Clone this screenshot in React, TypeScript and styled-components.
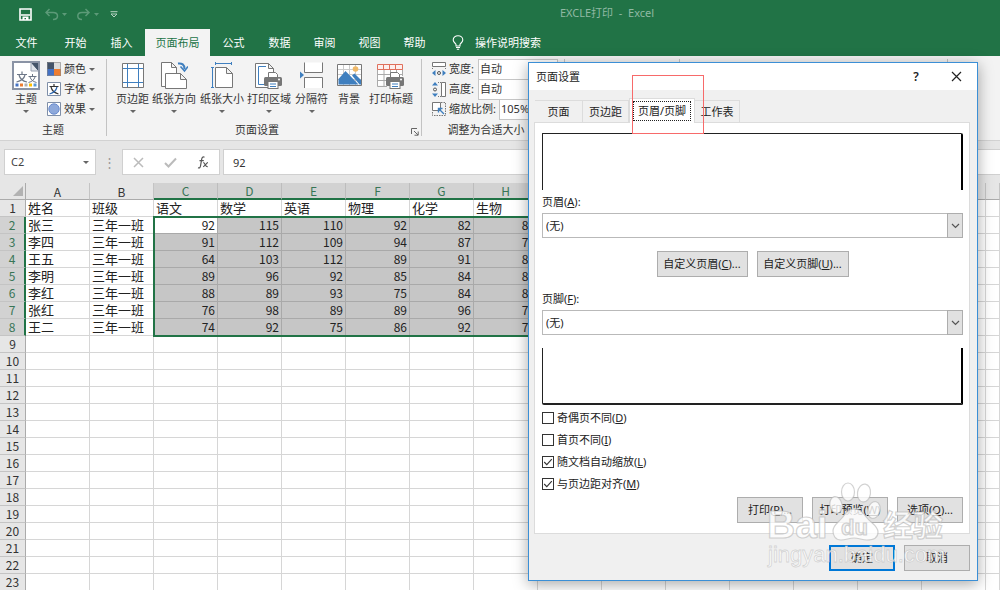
import React from 'react';
import styled, { createGlobalStyle } from 'styled-components';

const GlobalStyle = createGlobalStyle`
  * { box-sizing: border-box; }
  body {
    margin: 0;
    overflow: hidden;
    background: #e6e6e6;
    color: #333;
    font-family: "Noto Sans", "Noto Sans CJK SC", sans-serif;
    font-size: 11px;
    line-height: 16px;
  }
  button, input, select { font: inherit; color: inherit; margin: 0; }
`;

/* ---------- window ---------- */

const Window = styled.div`
  position: relative;
  display: flex;
  flex-direction: column;
  min-width: 0;
`;

const TitleBar = styled.header`
  display: flex;
  align-items: center;
  height: 28px;
  background: #217346;
`;

const QuickAccess = styled.div`
  display: flex;
  align-items: center;
  width: 214px;
  padding-left: 19px;
`;

const QuickButton = styled.button<{ $gap?: number }>`
  display: flex;
  padding: 0;
  border: 0;
  background: none;
  margin-right: ${(p) => p.$gap ?? 0}px;
`;

const DocTitle = styled.div`
  flex: 1;
  text-align: center;
  color: #90b9a3;
  line-height: 24px;
  padding-bottom: 3px;
  white-space: pre;
`;

const TabRow = styled.nav`
  display: flex;
  align-items: flex-end;
  height: 28px;
  background: #217346;
`;

const RibbonTab = styled.button<{ $width?: number; $active?: boolean }>`
  width: ${(p) => p.$width ?? 45}px;
  height: 27px;
  padding: 0;
  border: 0;
  white-space: nowrap;
  background: ${(p) => (p.$active ? '#f3f3f3' : 'transparent')};
  color: ${(p) => (p.$active ? '#217346' : '#fff')};
`;

const TellMe = styled.button`
  display: flex;
  align-items: center;
  gap: 11px;
  height: 27px;
  padding: 0 0 0 15px;
  border: 0;
  background: none;
  color: #fff;
`;

/* ---------- ribbon ---------- */

const Ribbon = styled.section`
  display: flex;
  height: 85px;
  padding: 3px 0 4px;
  background: #f3f3f3;
  border-bottom: 1px solid #d2d2d2;
`;

const Group = styled.div<{ $width: number }>`
  position: relative;
  display: flex;
  flex-direction: column;
  justify-content: space-between;
  flex: 0 0 ${(p) => p.$width}px;
  border-right: 1px solid #c3c3c3;
`;

const GroupBody = styled.div<{ $pad?: number }>`
  display: flex;
  padding-left: ${(p) => p.$pad ?? 0}px;
`;

const GroupLabel = styled.div<{ $inset?: boolean }>`
  padding-right: ${(p) => (p.$inset ? 14 : 0)}px;
  text-align: center;
  line-height: 12px;
`;

const Launcher = styled.button`
  position: absolute;
  right: 2px;
  bottom: 0;
  display: flex;
  padding: 0;
  border: 0;
  background: none;
`;

const BigButton = styled.button<{ $width: number }>`
  display: flex;
  flex-direction: column;
  align-items: center;
  width: ${(p) => p.$width}px;
  padding: 2px 0 0;
  border: 0;
  background: none;
  white-space: nowrap;
  & > svg:first-child { height: 29px; }
`;

const BigLabel = styled.span`
  line-height: 18px;
`;

const Arrow = styled.span`
  flex: none;
  width: 0;
  height: 0;
  border: 3px solid transparent;
  border-top-color: #666;
  border-bottom: 0;
`;

const BigArrow = styled(Arrow)`
  margin-top: 2px;
`;

const SmallStack = styled.div`
  display: flex;
  flex-direction: column;
`;

const SmallButton = styled.button`
  display: flex;
  align-items: center;
  gap: 3px;
  height: 20px;
  padding: 0 2px;
  border: 0;
  background: none;
`;

const FieldRow = styled.div`
  display: flex;
  align-items: center;
  gap: 3px;
  height: 20px;
`;

const FieldLabel = styled.label<{ $width: number }>`
  width: ${(p) => p.$width}px;
  white-space: nowrap;
`;

const RibbonSelect = styled.select<{ $width: number }>`
  appearance: none;
  width: ${(p) => p.$width}px;
  height: 21px;
  padding: 0 1px;
  border: 1px solid #c6c6c6;
  border-radius: 0;
  background: #fff;
`;

/* ---------- formula bar ---------- */

const FormulaBar = styled.section`
  display: flex;
  align-items: center;
  height: 42px;
  padding-left: 4px;
`;

const NameBox = styled.label`
  display: flex;
  align-items: center;
  width: 92px;
  height: 26px;
  padding: 0 6px;
  border: 1px solid #d0d0d0;
  background: #fff;
`;

const NameInput = styled.input`
  flex: 1;
  min-width: 0;
  padding: 0;
  border: 0;
  outline: 0;
  background: none;
  color: #444;
`;

const Grip = styled.div`
  width: 26px;
  text-align: center;
  color: #999;
  font-size: 13px;
`;

const FormulaTools = styled.div`
  display: flex;
  align-items: center;
  justify-content: space-around;
  width: 98px;
  height: 26px;
  border: 1px solid #d0d0d0;
  background: #fff;
`;

const ToolButton = styled.button`
  display: flex;
  padding: 0;
  border: 0;
  background: none;
`;

const FormulaInput = styled.input`
  flex: 1;
  min-width: 0;
  height: 26px;
  margin-left: 3px;
  padding: 0 9px;
  border: 1px solid #d0d0d0;
  border-right: 0;
  outline: 0;
  background: #fff;
`;

/* ---------- sheet ---------- */

const Sheet = styled.main`
  position: relative;
  background: #fff;
`;

const Grid = styled.table`
  width: 100%;
  table-layout: fixed;
  border-collapse: separate;
  border-spacing: 0;
  font-family: "Noto Sans CJK SC", sans-serif;
  color: #222;
`;

const Col = styled.col<{ $width?: number }>`
  width: ${(p) => (p.$width ? `${p.$width}px` : 'auto')};
`;

const ColHead = styled.th<{ $on?: boolean }>`
  height: 17px;
  padding: 0;
  font-size: 12px;
  font-weight: 400;
  line-height: 15px;
  color: ${(p) => (p.$on ? '#387556' : '#333')};
  background: ${(p) => (p.$on ? '#d2d2d2' : '#e6e6e6')};
  border-right: 1px solid ${(p) => (p.$on ? '#bdbdbd' : '#c4c4c4')};
  border-bottom: ${(p) => (p.$on ? '2px solid #217346' : '1px solid #ababab')};
`;

const Corner = styled.th`
  padding: 0 2px 0 0;
  background: #e6e6e6;
  border-right: 1px solid #ababab;
  border-bottom: 1px solid #ababab;
  text-align: right;
  line-height: 0;
`;

const RowHead = styled.th<{ $on?: boolean }>`
  height: 17px;
  padding: 0;
  font-size: 12px;
  font-weight: 400;
  line-height: 16px;
  color: ${(p) => (p.$on ? '#387556' : '#333')};
  background: ${(p) => (p.$on ? '#d2d2d2' : '#e6e6e6')};
  border-bottom: 1px solid #c4c4c4;
  border-right: ${(p) => (p.$on ? '2px solid #217346' : '1px solid #ababab')};
`;

const Cell = styled.td<{ $on?: boolean; $active?: boolean; $num?: boolean }>`
  height: 17px;
  padding: 0 2px;
  font-size: ${(p) => (p.$num ? 12 : 13)}px;
  line-height: 16px;
  white-space: nowrap;
  text-align: ${(p) => (p.$num ? 'right' : 'left')};
  background: ${(p) => (p.$on && !p.$active ? '#c6c6c6' : '#fff')};
  border-right: 1px solid ${(p) => (p.$on ? '#a9a9a9' : '#d6d6d6')};
  border-bottom: 1px solid ${(p) => (p.$on ? '#a9a9a9' : '#d6d6d6')};
`;

const SelectionFrame = styled.div`
  position: absolute;
  left: 153px;
  top: 33px;
  width: 450px;
  height: 121px;
  border: 2px solid #217346;
  pointer-events: none;
`;

/* ---------- dialog ---------- */

const Dialog = styled.section`
  position: absolute;
  isolation: isolate;
  left: 528px;
  top: 62px;
  width: 450px;
  border: 1px solid #3b8fd6;
  background: #f0f0f0;
  box-shadow: 0 3px 14px rgba(0, 0, 0, 0.35);
  color: #222;
`;

const DialogTitle = styled.header`
  display: flex;
  align-items: center;
  height: 27px;
  padding: 0 14px 0 7px;
  background: #fff;
`;

const DialogName = styled.h2`
  flex: 1;
  margin: 0;
  font-size: 11px;
  font-weight: 400;
`;

const TitleButton = styled.button<{ $gap?: number }>`
  display: flex;
  justify-content: center;
  width: 14px;
  margin-right: ${(p) => p.$gap ?? 0}px;
  padding: 0;
  border: 0;
  background: none;
  font-size: 12px;
  font-weight: 600;
`;

const DialogBody = styled.div`
  padding: 8px 7px 9px 5px;
`;

const TabStrip = styled.div`
  display: flex;
  align-items: flex-end;
  height: 24px;
  padding-left: 1px;
`;

const DialogTab = styled.button<{ $width: number; $active?: boolean }>`
  position: relative;
  display: flex;
  align-items: center;
  justify-content: center;
  width: ${(p) => p.$width}px;
  height: ${(p) => (p.$active ? 25 : 22)}px;
  margin-bottom: ${(p) => (p.$active ? -1 : 0)}px;
  padding: 0;
  z-index: ${(p) => (p.$active ? 1 : 0)};
  border: 1px solid #dcdcdc;
  border-bottom: 0;
  border-left-width: ${(p) => (p.$active ? 1 : 0)}px;
  background: ${(p) => (p.$active ? '#fff' : '#f0f0f0')};
  white-space: nowrap;
`;

const FocusBox = styled.span`
  padding: 1px 4px;
  border: 1px dotted #222;
`;

const Panel = styled.div`
  display: flex;
  flex-direction: column;
  padding: 10px 6px 10px 7px;
  border: 1px solid #dcdcdc;
  background: #fff;
`;

const Preview = styled.div<{ $side: 'top' | 'bottom' }>`
  height: 57px;
  border: solid #222;
  border-width: ${(p) => (p.$side === 'top' ? '1px 2px 0 1px' : '0 2px 2px 1px')};
  border-right-color: #000;
  border-radius: ${(p) => (p.$side === 'top' ? '1px 2px 0 0' : '0 0 1px 2px')};
  margin-top: ${(p) => (p.$side === 'top' ? 0 : 13)}px;
`;

const PanelLabel = styled.label<{ $top: number }>`
  margin-top: ${(p) => p.$top}px;
  margin-bottom: 3px;
`;

const Combo = styled.div`
  position: relative;
  height: 25px;
`;

const ComboSelect = styled.select`
  appearance: none;
  width: 100%;
  height: 25px;
  padding: 0 20px 0 3px;
  border: 1px solid #b9b9b9;
  border-radius: 0;
  background: #fff;
`;

const ComboArrow = styled.span`
  position: absolute;
  top: 0;
  right: 0;
  display: flex;
  align-items: center;
  justify-content: center;
  width: 16px;
  height: 25px;
  border: 1px solid #adadad;
  background: #e1e1e1;
  pointer-events: none;
`;

const ButtonRow = styled.div<{ $align: string; $top: number }>`
  display: flex;
  justify-content: ${(p) => p.$align};
  gap: 9px;
  margin-top: ${(p) => p.$top}px;
`;

const PushButton = styled.button<{ $width: number; $primary?: boolean }>`
  width: ${(p) => p.$width}px;
  height: 26px;
  padding: 0;
  border: ${(p) => (p.$primary ? '2px solid #0078d7' : '1px solid #adadad')};
  background: #e1e1e1;
  white-space: nowrap;
`;

const CheckList = styled.div`
  display: flex;
  flex-direction: column;
  align-items: flex-start;
  margin-top: 2px;
`;

const CheckLabel = styled.label`
  display: flex;
  align-items: center;
  gap: 3px;
  height: 22px;
`;

const CheckInput = styled.input`
  appearance: none;
  width: 12px;
  height: 12px;
  border: 1px solid #333;
  background: #fff;
  &:checked {
    background-image: url("data:image/svg+xml,%3Csvg xmlns='http://www.w3.org/2000/svg' viewBox='0 0 10 10'%3E%3Cpath d='M1.2 5l2.6 2.6L8.8 2.2' fill='none' stroke='%23333' stroke-width='1.1'/%3E%3C/svg%3E");
  }
`;

const RedMark = styled.div`
  position: absolute;
  left: 632px;
  top: 75px;
  width: 72px;
  height: 59px;
  border: 1px solid #f76a6a;
  pointer-events: none;
`;

const Watermark = styled.svg`
  position: absolute;
  left: 764px;
  top: 478px;
  pointer-events: none;
`;

/* ---------- icons ---------- */

const FoldPage = ({ x, y, w, h, f = 5 }: { x: number; y: number; w: number; h: number; f?: number }) => (
  <path
    d={`M${x} ${y}h${w - f}l${f} ${f}v${h - f}h${-w}zM${x + w - f} ${y}v${f}h${f}`}
    fill="#fff"
    stroke="#777"
  />
);

const Printer = ({ x, y }: { x: number; y: number }) => (
  <g transform={`translate(${x} ${y})`}>
    <path d="M4.500 6V.5h7l2 2V6" fill="#fff" stroke="#777" />
    <rect x="0" y="5" width="18" height="9" rx="1.500" fill="#777" />
    <circle cx="15" cy="7.500" r="1" fill="#fff" />
    <rect x="4" y="9.500" width="10" height="7" fill="#fff" stroke="#777" />
    <path d="M6 12h6M6 14.500h6" stroke="#3f7fbf" />
  </g>
);

const ThemeIcon = () => (
  <svg width="28" height="29" viewBox="0 0 28 29">
    <rect x="1" y="1" width="26" height="27" fill="#fff" stroke="#8a93a5" strokeWidth="2" />
    <path d="M19 2h7v8z" fill="#44546a" />
    <path d="M19 2v8h7" fill="#dfe3ea" stroke="#9aa3b3" />
    <path d="M5 13.500h10M10 10.500v3M7 14c1 4 3.500 6 8 7M13 14c-1 4-4 6-8.500 7" fill="none" stroke="#6d7787" strokeWidth="1.200" />
    <path d="M16.500 15.500h8M20.500 13v2.500M18 16c1 3 3 4.500 6.500 5.500M23 16c-1 3-3 4.500-6.500 5.500" fill="none" stroke="#6d7787" />
    <path d="M3.500 22.500h3v3h-3z" fill="#4472c4" />
    <path d="M8 22.500h3v3H8z" fill="#ed7d31" />
    <path d="M12.500 22.500h3v3h-3z" fill="#b0b0b0" />
    <path d="M17 22.500h3v3h-3z" fill="#ffc000" />
    <path d="M21.500 22.500h3v3h-3z" fill="#5b9bd5" />
  </svg>
);

const ColorsIcon = () => (
  <svg width="14" height="14" viewBox="0 0 14 14">
    <path d="M0 0h7v7H0z" fill="#44546a" />
    <path d="M7 0h7v7H7z" fill="#dcdcdc" />
    <path d="M0 7h7v7H0z" fill="#4472c4" />
    <path d="M7 7h7v7H7z" fill="#ed7d31" />
    <path d="M.5.5h13v13H.5z" fill="none" stroke="#8a8a8a" strokeOpacity=".6" />
  </svg>
);

const FontsIcon = () => (
  <svg width="14" height="14" viewBox="0 0 14 14">
    <path d="M.5.5h13v13H.5z" fill="#fff" stroke="#7f8fa8" />
    <path d="M2.500 4.500h9M7 2v2.500M4 5c1 4 3.500 6 7.500 7" fill="none" stroke="#333" strokeWidth="1.200" />
    <path d="M10 5c-1 4-3.500 6-7.500 7" fill="none" stroke="#2b66b0" strokeWidth="1.200" />
  </svg>
);

const EffectsIcon = () => (
  <svg width="14" height="14" viewBox="0 0 14 14">
    <path d="M.5.5h13v13H.5z" fill="#fff" stroke="#7f8fa8" />
    <circle cx="7" cy="7" r="5.200" fill="#8ea9db" stroke="#6a8bce" />
  </svg>
);

const MarginsIcon = () => (
  <svg width="22" height="29" viewBox="0 0 22 29">
    <path d="M.5 2.500h21v24H.5z" fill="#fff" stroke="#777" />
    <path d="M5.500 3v23M16.500 3v23M1 7.500h20M1 21.500h20" stroke="#3f7fbf" />
  </svg>
);

const OrientationIcon = () => (
  <svg width="27" height="29" viewBox="0 0 27 29">
    <FoldPage x={0.5} y={1.5} w={15} h={24} />
    <FoldPage x={4.5} y={12.5} w={21} h={15} f={6} />
    <path d="M17 2.500c4-.5 6.500 1 6.500 5.500" fill="none" stroke="#3f7fbf" strokeWidth="2" />
    <path d="M19.500 5.500l4 4.500 3.500-4.500" fill="none" stroke="#3f7fbf" strokeWidth="1.600" />
  </svg>
);

const SizeIcon = () => (
  <svg width="22" height="29" viewBox="0 0 22 29">
    <FoldPage x={4.5} y={6.5} w={17} h={20} f={6} />
    <path d="M4 2.500h17M4.500 1v3M20.500 1v3M1.500 6v21M0 6.500h3M0 26.500h3" stroke="#3f7fbf" />
  </svg>
);

const PrintAreaIcon = () => (
  <svg width="28" height="29" viewBox="0 0 28 29">
    <FoldPage x={0.5} y={2.5} w={18} h={24} />
    <path d="M11 5.500H3.500v18H9" fill="none" stroke="#3f7fbf" />
    <Printer x={9} y={11} />
  </svg>
);

const BreaksIcon = () => (
  <svg width="24" height="29" viewBox="0 0 24 29">
    <path d="M4.500 1.500v10h18v-10" fill="#fff" stroke="#777" />
    <path d="M4.500 27V16.500h18V27" fill="#fff" stroke="#777" />
    <path d="M0 10.500l4 3.500-4 3.500z" fill="#3f7fbf" />
  </svg>
);

const BackgroundIcon = () => (
  <svg width="25" height="29" viewBox="0 0 25 29">
    <path d="M.5 3.500h24v21H.5z" fill="#fff" stroke="#777" />
    <path d="M6.500 4v20M12.500 4v20M18.500 4v20M1 8.500h23M1 13.500h23M1 18.500h23" stroke="#ccc" />
    <circle cx="18.500" cy="8" r="2.800" fill="#efb867" />
    <path d="M1.500 23.500V18l7-8 13 13.500z" fill="#3f7fbf" />
    <path d="M15 14.500l2.500-2 6.500 6.500v4.500h-1.500z" fill="#3f7fbf" />
  </svg>
);

const PrintTitlesIcon = () => (
  <svg width="28" height="29" viewBox="0 0 28 29">
    <path d="M.5 3.500h25v21H.5z" fill="#fff" />
    <path d="M.5 8v17.500H10M.5 13.500h25M.5 19.500h12M7 8v17M13.500 8v12M19.500 8v7M25.500 8v7" fill="none" stroke="#aaa" />
    <path d="M.5 3.500h25v5H.5zM6.500 4v4M12.500 4v4M18.500 4v4" fill="#fdf0ee" stroke="#e0705c" />
    <Printer x={9} y={11} />
  </svg>
);

const WidthIcon = () => (
  <svg width="14" height="15" viewBox="0 0 14 15">
    <path d="M.5.5h13v4H.5z" fill="#fff" stroke="#777" />
    <path d="M0 11l3.500-3v6zM14 11l-3.500-3v6z" fill="#3f7fbf" />
    <circle cx="7" cy="11" r="1.500" fill="none" stroke="#555" />
    <path d="M.5 6v2M13.500 6v2" stroke="#777" strokeDasharray="1 1" />
  </svg>
);

const HeightIcon = () => (
  <svg width="14" height="15" viewBox="0 0 14 15">
    <path d="M9.500.5h4v14h-4z" fill="#fff" stroke="#777" />
    <path d="M3 0l3 3.500H0zM3 15l3-3.500H0z" fill="#3f7fbf" />
    <circle cx="3" cy="7.500" r="1.500" fill="none" stroke="#555" />
    <path d="M6 .5h3M6 14.500h3" stroke="#777" strokeDasharray="1 1" />
  </svg>
);

const ScaleIcon = () => (
  <svg width="14" height="14" viewBox="0 0 14 14">
    <path d="M.5.5h8v8h-8z" fill="#fff" stroke="#777" />
    <path d="M9 .5h4.500v13H.5V9" fill="none" stroke="#777" strokeDasharray="1.500 1" />
    <path d="M12 12L7 7M6.500 10.500v-4h4" fill="none" stroke="#3f7fbf" strokeWidth="1.400" />
  </svg>
);

const Chevron = () => (
  <svg width="9" height="6" viewBox="0 0 9 6">
    <path d="M1 1l3.500 3.500L8 1" fill="none" stroke="#555" strokeWidth="1.200" />
  </svg>
);

/* ---------- data ---------- */

const tabs = [
  { name: '文件', width: 53 },
  { name: '开始' },
  { name: '插入', width: 47 },
  { name: '页面布局', width: 65, active: true },
  { name: '公式', width: 47 },
  { name: '数据' },
  { name: '审阅' },
  { name: '视图' },
  { name: '帮助' },
];

const pageSetup = [
  { name: '页边距', width: 35, icon: <MarginsIcon />, menu: true },
  { name: '纸张方向', width: 48, icon: <OrientationIcon />, menu: true },
  { name: '纸张大小', width: 48, icon: <SizeIcon />, menu: true },
  { name: '打印区域', width: 46, icon: <PrintAreaIcon />, menu: true },
  { name: '分隔符', width: 39, icon: <BreaksIcon />, menu: true },
  { name: '背景', width: 36, icon: <BackgroundIcon /> },
  { name: '打印标题', width: 48, icon: <PrintTitlesIcon /> },
];

const columns = 'ABCDEFGHIJKLMNO'.split('');

const rows: (string | number)[][] = [
  ['姓名', '班级', '语文', '数学', '英语', '物理', '化学', '生物'],
  ['张三', '三年一班', 92, 115, 110, 92, 82, 85],
  ['李四', '三年一班', 91, 112, 109, 94, 87, 78],
  ['王五', '三年一班', 64, 103, 112, 89, 91, 86],
  ['李明', '三年一班', 89, 96, 92, 85, 84, 83],
  ['李红', '三年一班', 88, 89, 93, 75, 84, 80],
  ['张红', '三年一班', 76, 98, 89, 89, 96, 79],
  ['王二', '三年一班', 74, 92, 75, 86, 92, 75],
];

const rowCount = 23;
const colSelected = (c: number) => c >= 2 && c <= 8;
const rowSelected = (r: number) => r >= 1 && r <= 7;

const checks = [
  { id: 'odd', text: '奇偶页不同', key: 'D', on: false },
  { id: 'first', text: '首页不同', key: 'I', on: false },
  { id: 'scale', text: '随文档自动缩放', key: 'L', on: true },
  { id: 'align', text: '与页边距对齐', key: 'M', on: true },
];

/* ---------- parts ---------- */

const PageSetupDialog = () => (
  <Dialog role="dialog" aria-labelledby="dialog-name">
    <DialogTitle>
      <DialogName id="dialog-name">页面设置</DialogName>
      <TitleButton $gap={26}>?</TitleButton>
      <TitleButton aria-label="关闭">
        <svg width="11" height="11" viewBox="0 0 11 11">
          <path d="M1 1l9 9M10 1l-9 9" stroke="#222" strokeWidth="1.200" />
        </svg>
      </TitleButton>
    </DialogTitle>
    <DialogBody>
      <TabStrip>
        <DialogTab $width={48}>页面</DialogTab>
        <DialogTab $width={46}>页边距</DialogTab>
        <DialogTab $width={66} $active>
          <FocusBox>页眉/页脚</FocusBox>
        </DialogTab>
        <DialogTab $width={45}>工作表</DialogTab>
      </TabStrip>
      <Panel>
        <Preview $side="top" />
        <PanelLabel $top={4} htmlFor="header">
          页眉(<u>A</u>):
        </PanelLabel>
        <Combo>
          <ComboSelect id="header">
            <option>(无)</option>
          </ComboSelect>
          <ComboArrow>
            <Chevron />
          </ComboArrow>
        </Combo>
        <ButtonRow $align="center" $top={13}>
          <PushButton $width={91}>
            自定义页眉(<u>C</u>)...
          </PushButton>
          <PushButton $width={92}>
            自定义页脚(<u>U</u>)...
          </PushButton>
        </ButtonRow>
        <PanelLabel $top={14} htmlFor="footer">
          页脚(<u>F</u>):
        </PanelLabel>
        <Combo>
          <ComboSelect id="footer">
            <option>(无)</option>
          </ComboSelect>
          <ComboArrow>
            <Chevron />
          </ComboArrow>
        </Combo>
        <Preview $side="bottom" />
        <CheckList>
          {checks.map((c) => (
            <CheckLabel key={c.id} htmlFor={c.id}>
              <CheckInput id={c.id} type="checkbox" defaultChecked={c.on} />
              <span>
                {c.text}(<u>{c.key}</u>)
              </span>
            </CheckLabel>
          ))}
        </CheckList>
        <ButtonRow $align="flex-end" $top={2}>
          <PushButton $width={66}>
            打印(<u>P</u>)...
          </PushButton>
          <PushButton $width={76}>
            打印预览(<u>W</u>)
          </PushButton>
          <PushButton $width={66}>
            选项(<u>O</u>)...
          </PushButton>
        </ButtonRow>
      </Panel>
      <ButtonRow $align="flex-end" $top={11}>
        <PushButton $width={66} $primary>
          确定
        </PushButton>
        <PushButton $width={66}>取消</PushButton>
      </ButtonRow>
    </DialogBody>
  </Dialog>
);

const BaiduMark = () => (
  <Watermark width="188" height="96" viewBox="0 0 188 96" aria-hidden="true">
    <g
      fill="#fff"
      fillOpacity=".8"
      stroke="#b4b4b4"
      strokeOpacity=".6"
      strokeWidth="1.200"
      fontFamily="'Liberation Sans', 'Noto Sans CJK SC', sans-serif"
      fontWeight="700"
    >
      <text x="3" y="60" fontSize="39">Bai</text>
      <text x="119" y="58" fontSize="30">经验</text>
      <ellipse cx="84" cy="14" rx="6.500" ry="9" />
      <ellipse cx="100" cy="15" rx="6.500" ry="9" transform="rotate(8 100 15)" />
      <ellipse cx="72" cy="27" rx="6" ry="8.500" transform="rotate(-12 72 27)" />
      <ellipse cx="110" cy="32" rx="6" ry="8.500" transform="rotate(14 110 32)" />
      <path d="M90 31c7 0 9 4 13 9s11 8 11 14-5 8-11 8c-5 0-8-2-13-2s-8 2-13 2c-6 0-8-5-8-9 0-6 5-8 9-13s6-9 12-9z" />
      <text x="77" y="57" fontSize="22" fill="#f0f0f0">du</text>
    </g>
    <text
      x="4"
      y="84"
      fontSize="22"
      fontFamily="'Liberation Sans', sans-serif"
      fill="#fff"
      fillOpacity=".85"
      stroke="#bcbcbc"
      strokeOpacity=".6"
      strokeWidth=".8"
    >
      jingyan.baidu.com
    </text>
  </Watermark>
);

const App = () => (
  <>
    <GlobalStyle />
    <Window>
      <TitleBar>
        <QuickAccess>
          <QuickButton $gap={13} aria-label="保存">
            <svg width="13" height="13" viewBox="0 0 13 13">
              <path d="M1 1h11v11H1zM2 7h9" fill="none" stroke="#fff" strokeWidth="1.600" />
              <path d="M3.500 8.500h6V12H7V10H5.500v2h-2z" fill="#fff" />
            </svg>
          </QuickButton>
          <QuickButton $gap={9} aria-label="撤消">
            <svg width="23" height="13" viewBox="0 0 23 13">
              <path d="M4.500 1L1 4.500 4.500 8M1 4.500h7c3 0 4.500 1.500 4.500 3.500S11 11.500 8 11.500" fill="none" stroke="#5c9a78" strokeWidth="1.500" />
              <path d="M17 5h5l-2.500 3z" fill="#5c9a78" />
            </svg>
          </QuickButton>
          <QuickButton $gap={10} aria-label="恢复">
            <svg width="23" height="13" viewBox="0 0 23 13">
              <path d="M8.500 1L12 4.500 8.500 8M12 4.500H5C2 4.500.8 6 .8 8S2 11.500 5 11.500" fill="none" stroke="#5c9a78" strokeWidth="1.500" />
              <path d="M17 5h5l-2.500 3z" fill="#5c9a78" />
            </svg>
          </QuickButton>
          <QuickButton aria-label="自定义快速访问工具栏">
            <svg width="8" height="7" viewBox="0 0 8 7">
              <path d="M.5.7h7M1 3h6L4 6z" fill="none" stroke="#b5d2c1" />
            </svg>
          </QuickButton>
        </QuickAccess>
        <DocTitle>{'EXCLE打印  -  Excel'}</DocTitle>
      </TitleBar>

      <TabRow>
        {tabs.map((t) => (
          <RibbonTab key={t.name} $width={t.width} $active={t.active}>
            {t.name}
          </RibbonTab>
        ))}
        <TellMe>
          <svg width="12" height="15" viewBox="0 0 12 15">
            <path d="M4 11V9.500C4 8.500 1.200 7.500 1.200 5a4.800 4.300 0 0 1 9.600 0C10.800 7.500 8 8.500 8 9.500V11zM4 12.500h4M4.800 14.300h2.400" fill="none" stroke="#fff" strokeWidth="1.100" />
          </svg>
          操作说明搜索
        </TellMe>
      </TabRow>

      <Ribbon>
        <Group $width={107}>
          <GroupBody $pad={7}>
            <BigButton $width={38}>
              <ThemeIcon />
              <BigLabel>主题</BigLabel>
              <BigArrow />
            </BigButton>
            <SmallStack>
              <SmallButton>
                <ColorsIcon />
                颜色
                <Arrow />
              </SmallButton>
              <SmallButton>
                <FontsIcon />
                字体
                <Arrow />
              </SmallButton>
              <SmallButton>
                <EffectsIcon />
                效果
                <Arrow />
              </SmallButton>
            </SmallStack>
          </GroupBody>
          <GroupLabel>主题</GroupLabel>
        </Group>
        <Group $width={315}>
          <GroupBody $pad={8}>
            {pageSetup.map((b) => (
              <BigButton key={b.name} $width={b.width}>
                {b.icon}
                <BigLabel>{b.name}</BigLabel>
                {b.menu && <BigArrow />}
              </BigButton>
            ))}
          </GroupBody>
          <GroupLabel $inset>页面设置</GroupLabel>
          <Launcher aria-label="页面设置">
            <svg width="8" height="8" viewBox="0 0 8 8">
              <path d="M.5 6V.5H6M3 3l4 4M7.200 3.500v3.700H3.500" fill="none" stroke="#666" />
            </svg>
          </Launcher>
        </Group>
        <Group $width={143}>
          <GroupBody $pad={10}>
            <SmallStack>
              <FieldRow>
                <WidthIcon />
                <FieldLabel $width={26} htmlFor="w">宽度:</FieldLabel>
                <RibbonSelect $width={80} id="w">
                  <option>自动</option>
                </RibbonSelect>
              </FieldRow>
              <FieldRow>
                <HeightIcon />
                <FieldLabel $width={26} htmlFor="h">高度:</FieldLabel>
                <RibbonSelect $width={80} id="h">
                  <option>自动</option>
                </RibbonSelect>
              </FieldRow>
              <FieldRow>
                <ScaleIcon />
                <FieldLabel $width={47} htmlFor="s">缩放比例:</FieldLabel>
                <RibbonSelect $width={59} id="s">
                  <option>105%</option>
                </RibbonSelect>
              </FieldRow>
            </SmallStack>
          </GroupBody>
          <GroupLabel $inset>调整为合适大小</GroupLabel>
        </Group>
        <Group $width={115} />
        <Group $width={268} />
      </Ribbon>

      <FormulaBar>
        <NameBox>
          <NameInput aria-label="名称框" defaultValue="C2" />
          <Arrow />
        </NameBox>
        <Grip>⋮</Grip>
        <FormulaTools>
          <ToolButton aria-label="取消输入">
            <svg width="11" height="11" viewBox="0 0 11 11">
              <path d="M1 1l9 9M10 1l-9 9" stroke="#bbb" strokeWidth="1.500" />
            </svg>
          </ToolButton>
          <ToolButton aria-label="输入">
            <svg width="13" height="11" viewBox="0 0 13 11">
              <path d="M1 6l3.500 3.500L12 1.500" fill="none" stroke="#bbb" strokeWidth="2" />
            </svg>
          </ToolButton>
          <ToolButton aria-label="插入函数">
            <svg width="12" height="13" viewBox="0 0 12 13">
              <path d="M7.500 1.200C5.800.4 5 1.500 4.700 3.200L3.500 10c-.3 1.700-1 2.300-2.500 1.700M2.500 4.700h4.300" fill="none" stroke="#555" strokeWidth="1.200" />
              <path d="M6.200 6.500c2 0 1.800 4.500 4.600 4.200M11 6.500c-1.600 0-3 4.200-5 4.200" fill="none" stroke="#555" strokeWidth="1.100" />
            </svg>
          </ToolButton>
        </FormulaTools>
        <FormulaInput aria-label="编辑栏" defaultValue="92" />
      </FormulaBar>

      <Sheet>
        <Grid>
          <colgroup>
            <Col $width={26} />
            {columns.map((c) => (
              <Col key={c} $width={64} />
            ))}
            <Col />
          </colgroup>
          <thead>
            <tr>
              <Corner>
                <svg width="10" height="10" viewBox="0 0 10 10">
                  <path d="M10 0v10H0z" fill="#b2b2b2" />
                </svg>
              </Corner>
              {columns.map((c, i) => (
                <ColHead key={c} $on={colSelected(i)}>
                  {c}
                </ColHead>
              ))}
              <ColHead />
            </tr>
          </thead>
          <tbody>
            {Array.from({ length: rowCount }, (_, r) => (
              <tr key={r}>
                <RowHead $on={rowSelected(r)}>{r + 1}</RowHead>
                {Array.from({ length: columns.length + 1 }, (_, c) => {
                  const value = rows[r]?.[c];
                  return (
                    <Cell
                      key={c}
                      $on={rowSelected(r) && colSelected(c)}
                      $active={r === 1 && c === 2}
                      $num={typeof value === 'number'}
                    >
                      {value}
                    </Cell>
                  );
                })}
              </tr>
            ))}
          </tbody>
        </Grid>
        <SelectionFrame />
      </Sheet>

      <PageSetupDialog />
      <RedMark />
      <BaiduMark />
    </Window>
  </>
);

export default App;
